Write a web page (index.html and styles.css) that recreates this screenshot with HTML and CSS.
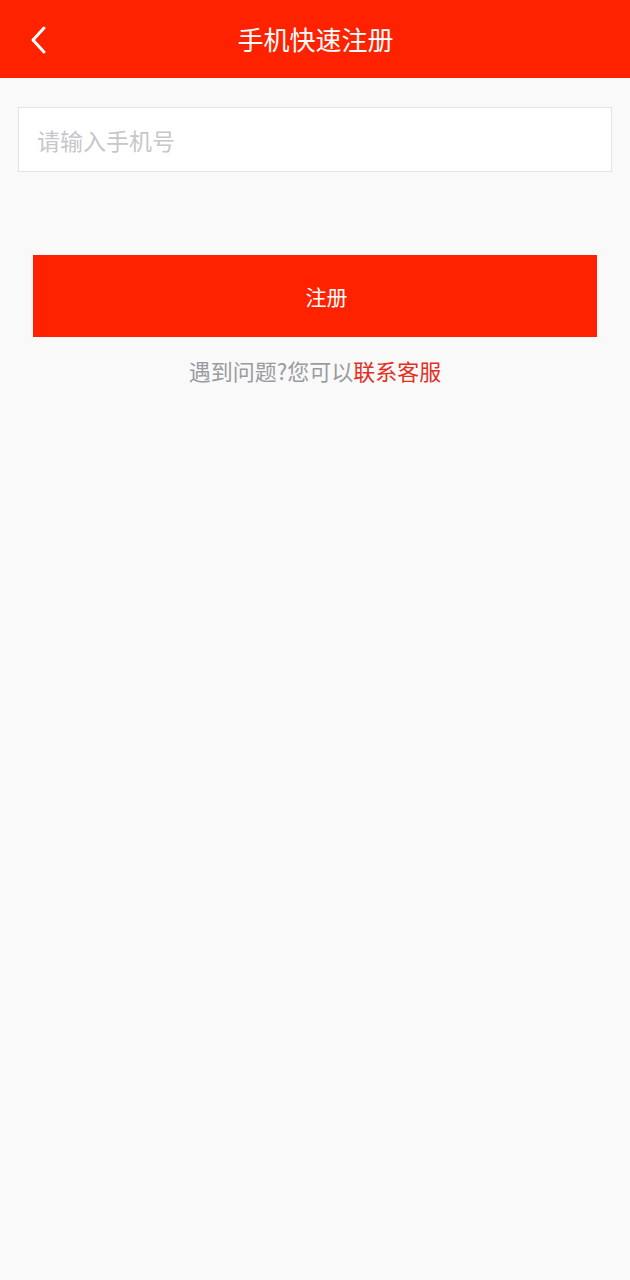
FILE: index.html
```html
<!DOCTYPE html>
<html lang="zh">
<head>
<meta charset="utf-8">
<title>手机快速注册</title>
<link rel="stylesheet" href="styles.css">
</head>
<body>
<header class="topbar">
  <span class="back">
    <svg width="20" height="30" viewBox="0 0 20 30"><path d="M15 3 L4 15 L15 27" fill="none" stroke="#fff" stroke-width="3" stroke-linecap="round" stroke-linejoin="round"/></svg>
  </span>
  <h1 class="title">手机快速注册</h1>
</header>
<main class="content">
  <div class="field"><input class="phone" type="tel" placeholder="请输入手机号"></div>
  <button class="submit">注册</button>
  <p class="help">遇到问题?您可以<span class="link">联系客服</span></p>
</main>
</body>
</html>
```
FILE: styles.css
```css
html, body {
  margin: 0;
  padding: 0;
  background: #f9f9f9;
  font-family: "Noto Sans CJK SC", "Noto Sans", sans-serif;
}
.topbar {
  position: relative;
  height: 78px;
  background: #ff2200;
  display: flex;
  align-items: center;
  justify-content: center;
}
.back {
  position: absolute;
  left: 29px;
  top: 25px;
  display: block;
  width: 20px;
  height: 30px;
}
.back svg { display: block; }
.title {
  margin: 0;
  color: #fff;
  font-size: 26px;
  font-weight: 400;
  line-height: 1;
  padding-left: 1px;
}
.content {
  padding: 29px 18px 0 18px;
  display: flex;
  flex-direction: column;
}
.field {
  height: 63px;
  border: 1px solid #e4e4e4;
  background: #fff;
  display: flex;
  align-items: center;
}
.phone {
  border: 0;
  outline: 0;
  background: transparent;
  width: 100%;
  padding: 0 0 0 18px;
  font-family: inherit;
  font-size: 23px;
  color: #333;
}
.phone::placeholder { color: #c6c7ca; }
.submit {
  margin: 83px 15px 0 15px;
  height: 82px;
  border: 0;
  background: #ff2200;
  color: #fff;
  font-family: inherit;
  font-size: 21px;
  padding: 0 0 0 23px;
}
.help {
  margin: 18px 0 0 0;
  text-align: center;
  font-size: 22px;
  line-height: 30px;
  color: #9a9ca2;
}
.link { color: #e3301f; }
```
